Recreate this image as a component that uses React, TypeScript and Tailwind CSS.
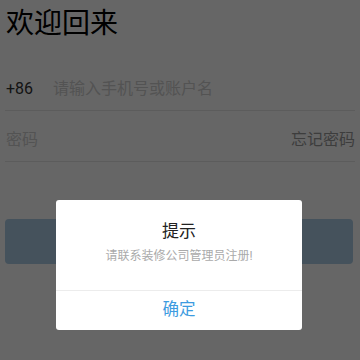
import React from "react";

export default function App() {
  return (
    <div
      className="relative w-[360px] h-[360px] overflow-hidden bg-white"
      style={{ fontFamily: '"Roboto", "Noto Sans CJK SC", sans-serif' }}
    >
      <div className="px-[5px]">
        <div className="pt-[10px] pl-[1px] text-[28px] leading-[28px] text-black">欢迎回来</div>
        <div className="mt-[22px] h-[51px] pt-[8px] flex items-center border-b border-[#e6e6e6]">
          <span className="pl-[1px] w-[48px] text-[16px] text-[#333]">+86</span>
          <span className="text-[16px] text-[#cfcfcf]">请输入手机号或账户名</span>
        </div>
        <div className="h-[51px] pt-[8px] flex items-center justify-between border-b border-[#e6e6e6]">
          <span className="pl-[1px] text-[16px] text-[#cfcfcf]">密码</span>
          <span className="text-[16px] text-[#999]">忘记密码</span>
        </div>
        <button className="mt-[57px] w-[348px] h-[45px] rounded-[4px] bg-[#accde6] text-white text-[16px]">
          登录
        </button>
      </div>

      <div className="absolute inset-0 bg-black/60 flex justify-center pt-[200px]">
        <div className="ml-[-2px] w-[246px] h-[130px] bg-white rounded-[3px] flex flex-col">
          <div className="flex flex-col items-center pt-[20px] h-[91px] border-b border-[#ececec]">
            <div className="text-[17px] leading-[22px] text-[#222]">提示</div>
            <div className="mt-[5px] text-[12px] leading-[18px] text-[#aaa]">请联系装修公司管理员注册!</div>
          </div>
          <div className="flex-1 flex items-center justify-center text-[16.5px] text-[#3d9be0]">确定</div>
        </div>
      </div>
    </div>
  );
}
